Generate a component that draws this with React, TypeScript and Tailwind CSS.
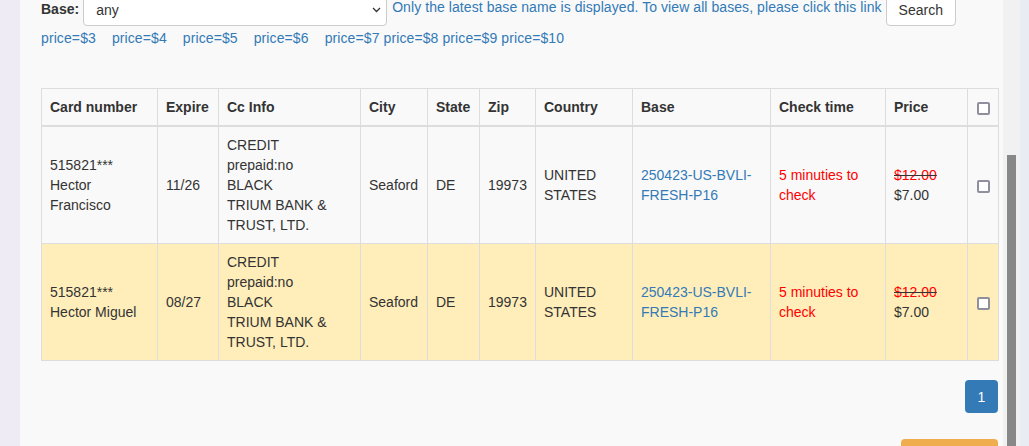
import React from "react";

type Card = {
  bin: string;
  name: string;
  expire: string;
  city: string;
  state: string;
  zip: string;
  base: string;
  highlight?: boolean;
};

const cards: Card[] = [
  { bin: "515821***", name: "Hector Francisco", expire: "11/26", city: "Seaford", state: "DE", zip: "19973", base: "250423-US-BVLI-FRESH-P16" },
  { bin: "515821***", name: "Hector Miguel", expire: "08/27", city: "Seaford", state: "DE", zip: "19973", base: "250423-US-BVLI-FRESH-P16", highlight: true },
];

const prices = ["$3", "$4", "$5", "$6", "$7", "$8", "$9", "$10"];

const cell = "border border-[#ddd] px-2 py-2 align-middle";

function Checkbox() {
  return (
    <span className="inline-block h-[13px] w-[13px] rounded-[2px] border-2 border-[#8f8f9d] bg-white align-middle" />
  );
}

export default function App() {
  return (
    <div
      className="flex h-[446px] overflow-hidden text-[14px] leading-5 text-[#333]"
      style={{ fontFamily: '"Liberation Sans", Arial, sans-serif' }}
    >
      <div className="w-[20px] shrink-0 bg-[#eeebf4]" />
      <div className="w-[983px] shrink-0 bg-[#f9f9f9] pl-[21px] pr-[5px]">
        <div className="-mt-[8px] flex items-center">
          <label className="mr-[4px] font-bold">Base:</label>
          <div className="relative flex h-[34px] w-[304px] items-center rounded-[4px] border border-[#ccc] bg-white pl-[12px] pt-[2px]">
            <span>any</span>
            <svg className="absolute right-[5px] top-[14px]" width="9" height="6" viewBox="0 0 9 6">
              <path d="M1 1l3.5 3.5L8 1" fill="none" stroke="#333" strokeWidth="1.3" />
            </svg>
          </div>
          <a className="ml-[5px] -mt-[4px] tracking-[0.07px] text-[#337ab7]">
            Only the latest base name is displayed. To view all bases, please click this link
          </a>
          <button className="ml-[4px] h-[34px] rounded-[4px] border border-[#ccc] bg-white px-[12px] pt-[2px]">
            Search
          </button>
        </div>
        <div className="mt-[2px] flex h-5 items-center tracking-[0.1px]">
          {prices.map((p, i) => (
            <a key={p} className={`text-[#337ab7] ${i < 4 ? "mr-[16px]" : "mr-[4px]"}`}>
              price={p}
            </a>
          ))}
        </div>
        <table className="mt-[40px] w-[957px] table-fixed border-collapse">
          <colgroup>
            <col className="w-[116px]" />
            <col className="w-[61px]" />
            <col className="w-[142px]" />
            <col className="w-[67px]" />
            <col className="w-[52px]" />
            <col className="w-[56px]" />
            <col className="w-[97px]" />
            <col className="w-[138px]" />
            <col className="w-[115px]" />
            <col className="w-[82px]" />
            <col className="w-[31px]" />
          </colgroup>
          <thead>
            <tr className="text-left font-bold">
              {["Card number", "Expire", "Cc Info", "City", "State", "Zip", "Country", "Base", "Check time", "Price"].map((h) => (
                <th key={h} className={`${cell} border-b-2 whitespace-nowrap`}>
                  {h}
                </th>
              ))}
              <th className={`${cell} border-b-2 text-center`}>
                <Checkbox />
              </th>
            </tr>
          </thead>
          <tbody>
            {cards.map((c) => (
              <tr key={c.name} className={c.highlight ? "bg-[#ffeeba]" : ""}>
                <td className={cell}>
                  {c.bin}
                  <br />
                  {c.name}
                </td>
                <td className={cell}>{c.expire}</td>
                <td className={cell}>
                  CREDIT
                  <br />
                  prepaid:no
                  <br />
                  BLACK
                  <br />
                  TRIUM BANK &amp; TRUST, LTD.
                </td>
                <td className={cell}>{c.city}</td>
                <td className={cell}>{c.state}</td>
                <td className={cell}>{c.zip}</td>
                <td className={cell}>UNITED STATES</td>
                <td className={cell}>
                  <a className="text-[#337ab7]">
                    250423-US-BVLI-
                    <br />
                    FRESH-P16
                  </a>
                </td>
                <td className={`${cell} text-[#ff0000]`}>5 minuties to check</td>
                <td className={cell}>
                  <s className="text-[#333]">
                    <span className="text-[#ff0000]">$12.00</span>
                  </s>
                  <br />
                  $7.00
                </td>
                <td className={`${cell} text-center`}>
                  <Checkbox />
                </td>
              </tr>
            ))}
          </tbody>
        </table>
        <div className="mt-[19px] flex justify-end">
          <span className="flex h-[33px] w-[33px] items-center justify-center rounded-[4px] bg-[#337ab7] text-white">
            1
          </span>
        </div>
        <div className="mt-[26px] flex justify-end">
          <span className="h-[34px] w-[97px] rounded-[4px] bg-[#f0ad4e]" />
        </div>
      </div>
      <div className="w-[17px] shrink-0 bg-[#f1f1f1] pl-[4px] pt-[155px]">
        <div className="h-full w-[9px] bg-[#888]" />
      </div>
      <div className="flex-1 bg-[#e9ecf2]" />
    </div>
  );
}
